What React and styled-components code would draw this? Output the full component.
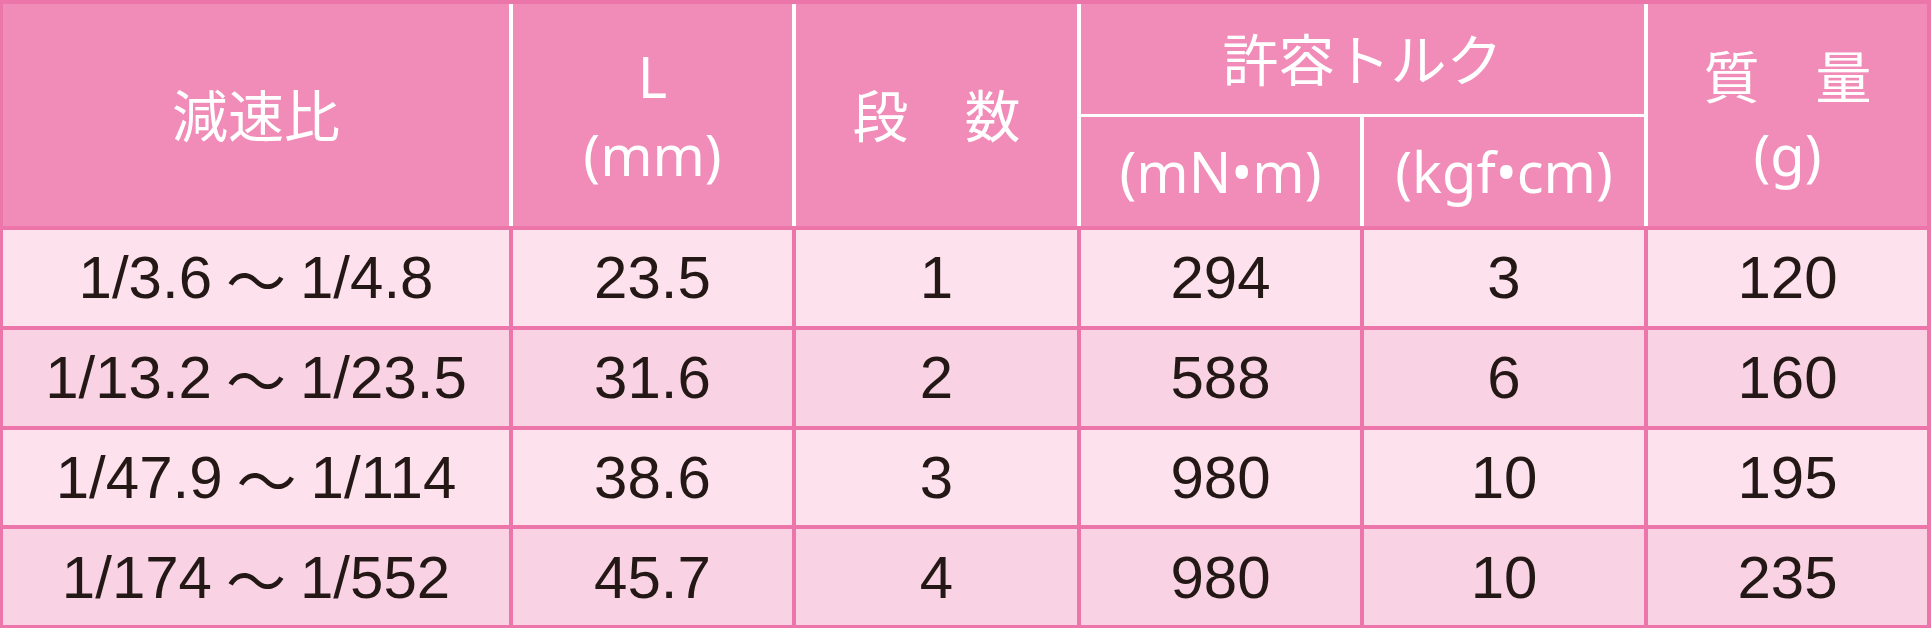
import React from 'react';
import styled, {createGlobalStyle} from 'styled-components';

const COLS = '506px 279px 281px 279px 280px 279px';

const rows = [
    ['1/3.6 ～ 1/4.8', '23.5', '1', '294', '3', '120'],
    ['1/13.2 ～ 1/23.5', '31.6', '2', '588', '6', '160'],
    ['1/47.9 ～ 1/114', '38.6', '3', '980', '10', '195'],
    ['1/174 ～ 1/552', '45.7', '4', '980', '10', '235'],
];

const App = () => {
    return (
        <>
            <GlobalStyle/>
            <Frame>
                <Head>
                    <HeadCell $col="1" $row="1 / span 2">減速比</HeadCell>
                    <HeadCell $col="2" $row="1 / span 2">
                        <HeadLine>L</HeadLine>
                        <HeadLine>(mm)</HeadLine>
                    </HeadCell>
                    <HeadCell $col="3" $row="1 / span 2">段　数</HeadCell>
                    <HeadCell $col="4 / span 2" $row="1">許容トルク</HeadCell>
                    <HeadCell $col="4" $row="2">(mN•m)</HeadCell>
                    <HeadCell $col="5" $row="2">(kgf•cm)</HeadCell>
                    <HeadCell $col="6" $row="1 / span 2">
                        <HeadLine>質　量</HeadLine>
                        <HeadLine>(g)</HeadLine>
                    </HeadCell>
                </Head>

                {rows.map((row, i) => row.map((value, j) =>
                    <Cell key={`${i}-${j}`} $dark={i % 2 === 1}>
                        {value.includes('～') ? <Ratio value={value}/> : value}
                    </Cell>
                ))}
            </Frame>
        </>
    );
};

const Ratio = ({value}) => {
    const [from, to] = value.split(' ～ ');
    return (
        <>
            {from}<Wave>～</Wave>{to}
        </>
    );
};

const GlobalStyle = createGlobalStyle`
  html, body {
    margin: 0;
    padding: 0;
    background: #ffffff;
  }
`;

const Frame = styled.div`
  width: 1931px;
  height: 628px;
  box-sizing: border-box;
  padding: 4px 4px 3px 3px;
  background-color: #ec76a9;
  display: grid;
  grid-template-columns: ${COLS};
  grid-template-rows: 222px repeat(4, 1fr);
  gap: 4px;
`;

const Head = styled.div`
  grid-column: 1 / -1;
  display: grid;
  grid-template-columns: ${COLS};
  grid-template-rows: 1fr 1fr;
  column-gap: 4px;
  row-gap: 3px;
  background-color: #ffffff;
`;

const HeadCell = styled.div`
  grid-column: ${p => p.$col};
  grid-row: ${p => p.$row};
  display: flex;
  flex-direction: column;
  align-items: center;
  justify-content: center;
  background-color: #f18cb8;
  color: #ffffff;
  font-family: "Noto Sans", "Noto Sans CJK JP", sans-serif;
  font-size: 56px;
  line-height: 78px;
  white-space: nowrap;
`;

const HeadLine = styled.span`
  display: block;
`;

const Cell = styled.div`
  display: flex;
  align-items: center;
  justify-content: center;
  background-color: ${p => p.$dark ? '#f9d2e4' : '#fde1ed'};
  color: #231815;
  font-family: "Liberation Sans", Arial, sans-serif;
  font-size: 60px;
  white-space: nowrap;
`;

const Wave = styled.span`
  font-family: "Noto Sans CJK JP", sans-serif;
  margin: 0 14px;
`;

export default App;
